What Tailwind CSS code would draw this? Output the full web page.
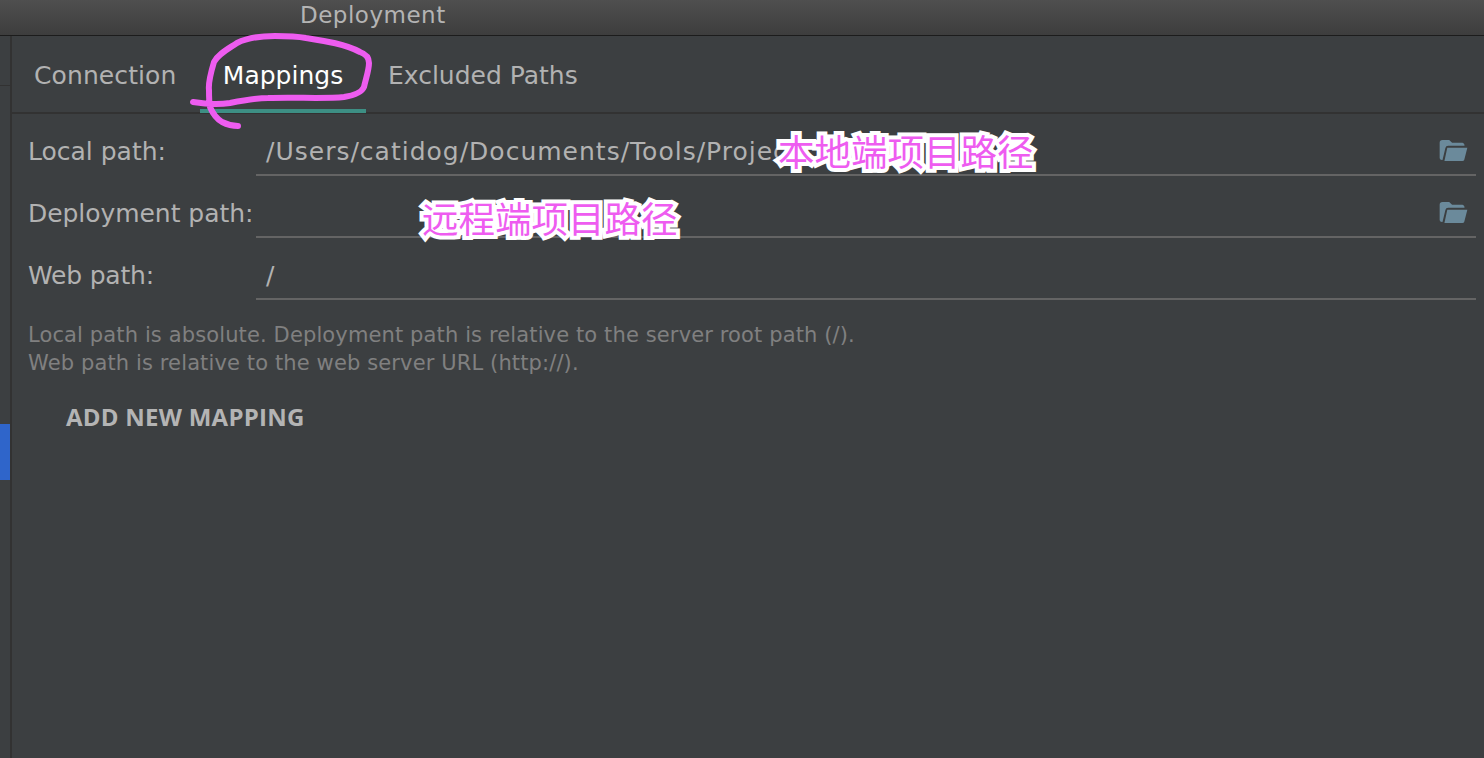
<!DOCTYPE html>
<html lang="en">

<head>
  <meta charset="UTF-8">
  <title>Deployment</title>
  <script src="https://cdn.jsdelivr.net/npm/@tailwindcss/browser@4"></script>
</head>

<body class="bg-[#3c3f41] font-['DejaVu_Sans',sans-serif] text-[#b2b2b2] overflow-hidden">
  <div class="relative w-[1484px] h-[758px] flex flex-col overflow-hidden">
    <!-- title bar -->
    <div class="h-[36px] shrink-0 bg-gradient-to-b from-[#4f4f4f] to-[#3d3d3d] border-b border-[#1c1c1c] pl-[300px] text-[23px] tracking-[0.5px] leading-[30px] text-[#b4b4b4]">Deployment</div>

    <div class="flex-1 flex">
      <!-- left rail -->
      <div class="w-[12px] shrink-0 border-r-2 border-[#323232] flex flex-col">
        <div class="h-[50px] border-b border-[#323232]"></div>
        <div class="mt-[338px] w-[10px] h-[56px] bg-[#2f65ca]"></div>
      </div>

      <div class="flex-1 flex flex-col">
        <!-- tabs -->
        <div class="h-[78px] shrink-0 border-b-2 border-[#323232] flex text-[25px] leading-[79px]">
          <div class="pl-[22px] w-[188px] tracking-[0.1px]">Connection</div>
          <div class="w-[166px] h-[77px] text-center text-white border-b-4 border-[#3d8f84]">Mappings</div>
          <div class="pl-[22px]">Excluded Paths</div>
        </div>

        <!-- fields -->
        <div class="flex flex-col pl-[16px] pr-[8px] text-[25px] pt-[15px]">
          <div class="flex h-[47px]">
            <div class="w-[228px] leading-[46px]">Local path:</div>
            <div class="flex-1 flex justify-between border-b-2 border-[#646464] pl-[10px] pr-[8px] leading-[46px]">
              <span class="tracking-[1px]">/Users/catidog/Documents/Tools/Project</span>
              <svg class="mt-[11px]" width="29" height="21" viewBox="0 0 29 22"><path fill="#6b8a9b" d="M0 3a3 3 0 0 1 3-3h7l3 3h11a3 3 0 0 1 2 2v1H9a3 3 0 0 0-3 2.400L3 21a3 3 0 0 1-3-2zM8 8h21l-3 12a2 2 0 0 1-2 2H5z"/></svg>
            </div>
          </div>
          <div class="flex h-[62px]">
            <div class="w-[228px] leading-[76px] tracking-[-0.05px]">Deployment path:</div>
            <div class="flex-1 flex justify-end border-b-2 border-[#646464] pr-[8px]">
              <svg class="mt-[26px]" width="29" height="21" viewBox="0 0 29 22"><path fill="#6b8a9b" d="M0 3a3 3 0 0 1 3-3h7l3 3h11a3 3 0 0 1 2 2v1H9a3 3 0 0 0-3 2.400L3 21a3 3 0 0 1-3-2zM8 8h21l-3 12a2 2 0 0 1-2 2H5z"/></svg>
            </div>
          </div>
          <div class="flex h-[62px]">
            <div class="w-[228px] leading-[76px] tracking-[-0.2px]">Web path:</div>
            <div class="flex-1 border-b-2 border-[#646464] pl-[10px] leading-[76px]">/</div>
          </div>
          <div class="mt-[21px] text-[21px] tracking-[0.125px] leading-[28px] text-[#808080]">
            <div>Local path is absolute. Deployment path is relative to the server root path (/).</div>
            <div>Web path is relative to the web server URL (http://).</div>
          </div>
          <div class="mt-[25px] pl-[38px] text-[24px] font-bold leading-[30px] tracking-[0.25px] text-[#b4b4b4] font-['Open_Sans',sans-serif]">ADD NEW MAPPING</div>
        </div>
      </div>
    </div>

    <!-- annotations -->
    <div class="absolute left-[778px] top-[127px] text-[36.500px] leading-[48px] text-[#ee5cf0] font-['Noto_Sans_CJK_SC',sans-serif] [-webkit-text-stroke:8px_white] [paint-order:stroke_fill]">本地端项目路径</div>
    <div class="absolute left-[422px] top-[194px] text-[36.500px] leading-[48px] text-[#ee5cf0] font-['Noto_Sans_CJK_SC',sans-serif] [-webkit-text-stroke:8px_white] [paint-order:stroke_fill]">远程端项目路径</div>
    <svg class="absolute left-0 top-0" width="500" height="140" fill="none"><path stroke="#ee5cf0" stroke-width="6" stroke-linecap="round" stroke-linejoin="round" d="M193 102C205 104 218 105 230 103C245 100 256 98 268 98C295 97 325 99 344 97C356 95 362 92 364 87C366 78 369 70 369 63C369 57 366 54 360 52C345 44 325 41 306 38C295 36 285 36 275 36C260 36 247 38 237 43C228 49 218 54 214 62C211 72 208 82 209 90C209 97 209 102 210 107C213 114 217 119 222 122C228 125 233 126 238 126"/></svg>
  </div>
</body>

</html>
